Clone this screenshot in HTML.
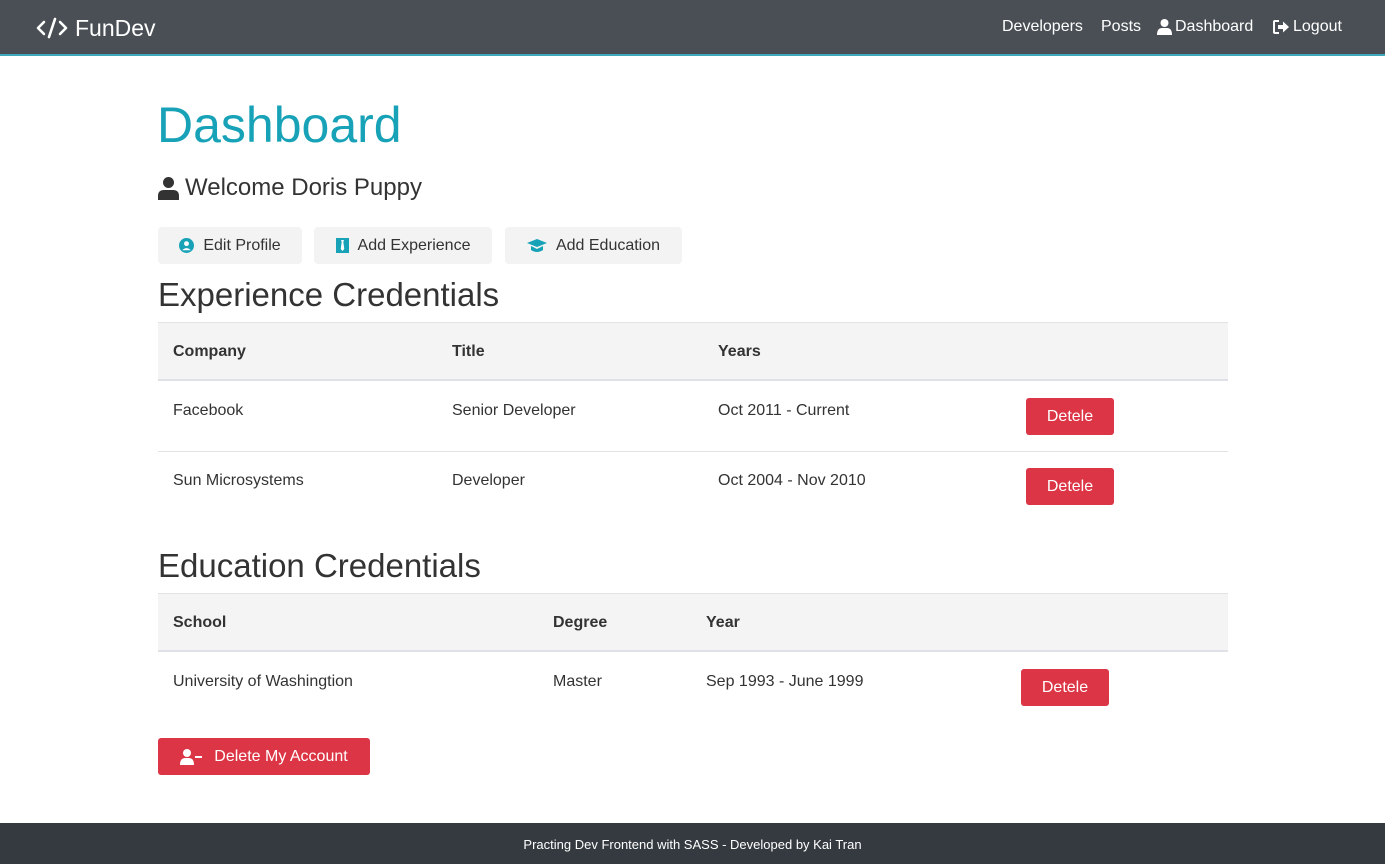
<!DOCTYPE html>
<html><head><meta charset="utf-8"><style>
*{margin:0;padding:0;box-sizing:border-box}
body{width:1385px;height:864px;position:relative;font-family:"Liberation Sans",sans-serif;color:#333;background:#fff;overflow:hidden}
.a{position:absolute;white-space:nowrap}
nav{position:absolute;left:0;top:0;width:1385px;height:56px;background:#4a4f55;border-bottom:2px solid #3fa9bb}
.nl{color:#fff;font-size:16px;top:18px}
.btn{position:absolute;background:#f3f3f3;border-radius:4px;height:37px;top:227px;font-size:16px;color:#333;display:flex;align-items:center;justify-content:center;gap:9px}
h2{position:absolute;font-weight:normal;font-size:33px;color:#333}
.hd{position:absolute;left:158px;width:1070px;height:59px;background:#f4f4f4;border-top:1px solid #e3e3e3;border-bottom:2px solid #dee2e6}
.th{position:absolute;font-weight:bold;font-size:16px;color:#333}
.td{position:absolute;font-size:16px;color:#333}
.line{position:absolute;left:158px;width:1070px;height:1px;background:#e3e3e3}
.del{position:absolute;width:88px;height:37px;background:#dc3545;color:#fff;border-radius:3px;font-size:16px;display:flex;align-items:center;justify-content:center}
</style></head><body>
<nav>
<svg class="a" style="left:36px;top:17px" width="32" height="22" viewBox="0 0 32 22"><path d="M8 5 L2 11 L8 17 M24 5 L30 11 L24 17 M19 2 L13 20" stroke="#fff" stroke-width="2.6" fill="none" stroke-linecap="round" stroke-linejoin="round"/></svg>
<div class="a" style="left:75px;top:15px;color:#fff;font-size:23px">FunDev</div>
<div class="a nl" style="left:1002px">Developers</div>
<div class="a nl" style="left:1101px">Posts</div>
<svg class="a" style="left:1157px;top:19px" width="15" height="16" viewBox="0 0 15 16"><circle cx="7.5" cy="4" r="4" fill="#fff"/><path d="M0 16 Q0 9 5 9 L10 9 Q15 9 15 16Z" fill="#fff"/></svg>
<div class="a nl" style="left:1175px">Dashboard</div>
<svg class="a" style="left:1273px;top:20px" width="17" height="14" viewBox="0 0 17 14"><path d="M6 1 H2 Q1 1 1 2 V12 Q1 13 2 13 H6" stroke="#fff" stroke-width="2" fill="none"/><path d="M5 5 H10 V1.5 L16 7 L10 12.5 V9 H5Z" fill="#fff"/></svg>
<div class="a nl" style="left:1293px">Logout</div>
</nav>
<div class="a" style="left:157px;top:96px;font-size:50px;color:#17a2b8">Dashboard</div>
<svg class="a" style="left:158px;top:177px" width="21" height="23" viewBox="0 0 21 23"><circle cx="10.5" cy="5.5" r="5.5" fill="#333"/><path d="M0 23 V19 Q0 13 6 13 H15 Q21 13 21 19 V23Z" fill="#333"/></svg>
<div class="a" style="left:185px;top:174px;font-size:24px;color:#333">Welcome Doris Puppy</div>
<div class="btn" style="left:158px;width:144px"><svg width="15" height="15" viewBox="0 0 16 16"><circle cx="8" cy="8" r="8" fill="#17a2b8"/><circle cx="8" cy="6" r="2.6" fill="#fff"/><path d="M3.5 13 Q8 8.5 12.5 13" fill="#fff"/></svg>Edit Profile</div>
<div class="btn" style="left:314px;width:178px"><svg width="13" height="15" viewBox="0 0 13 15"><rect width="13" height="15" fill="#17a2b8"/><path d="M5 2 H8 L7.3 4 L8.3 11 L6.5 13 L4.7 11 L5.7 4Z" fill="#fff"/></svg>Add Experience</div>
<div class="btn" style="left:505px;width:177px"><svg width="20" height="14" viewBox="0 0 20 14"><path d="M10 0 L20 4 L10 8 L0 4Z" fill="#17a2b8"/><path d="M4 7 V11 Q10 15 16 11 V7 L10 10Z" fill="#17a2b8"/></svg>Add Education</div>
<h2 style="left:158px;top:276px">Experience Credentials</h2>
<div class="hd" style="top:322px"></div>
<div class="th" style="left:173px;top:343px">Company</div>
<div class="th" style="left:452px;top:343px">Title</div>
<div class="th" style="left:718px;top:343px">Years</div>
<div class="td" style="left:173px;top:402px">Facebook</div>
<div class="td" style="left:452px;top:402px">Senior Developer</div>
<div class="td" style="left:718px;top:402px">Oct 2011 - Current</div>
<div class="del" style="left:1026px;top:398px">Detele</div>
<div class="line" style="top:451px"></div>
<div class="td" style="left:173px;top:472px">Sun Microsystems</div>
<div class="td" style="left:452px;top:472px">Developer</div>
<div class="td" style="left:718px;top:472px">Oct 2004 - Nov 2010</div>
<div class="del" style="left:1026px;top:468px">Detele</div>
<h2 style="left:158px;top:547px">Education Credentials</h2>
<div class="hd" style="top:593px"></div>
<div class="th" style="left:173px;top:614px">School</div>
<div class="th" style="left:553px;top:614px">Degree</div>
<div class="th" style="left:706px;top:614px">Year</div>
<div class="td" style="left:173px;top:673px">University of Washingtion</div>
<div class="td" style="left:553px;top:673px">Master</div>
<div class="td" style="left:706px;top:673px">Sep 1993 - June 1999</div>
<div class="del" style="left:1021px;top:669px">Detele</div>
<div class="del" style="left:158px;top:738px;width:212px;gap:12px"><svg width="22" height="16" viewBox="0 0 22 16"><circle cx="7" cy="4" r="4" fill="#fff"/><path d="M0 16 Q0 9 5 9 H9 Q14 9 14 16Z" fill="#fff"/><rect x="15" y="7" width="7" height="2" fill="#fff"/></svg>Delete My Account</div>
<div class="a" style="left:0;top:823px;width:1385px;height:41px;background:#343a40;color:#fff;font-size:13px;text-align:center;line-height:43px">Practing Dev Frontend with SASS - Developed by Kai Tran</div>
</body></html>
